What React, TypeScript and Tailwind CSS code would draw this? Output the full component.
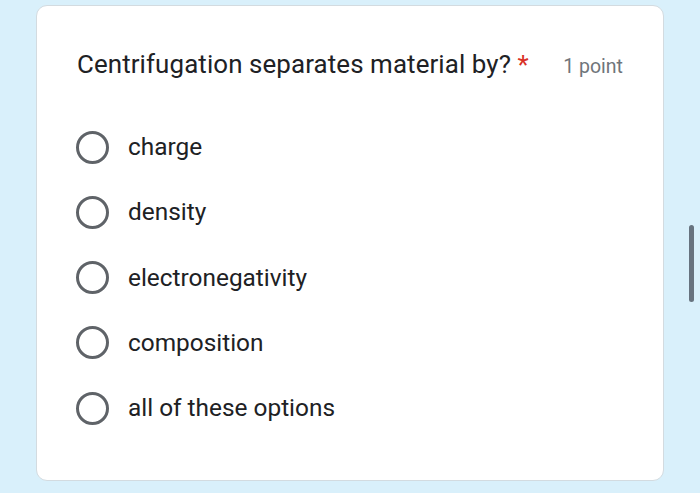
import React from "react";

const options = ["charge", "density", "electronegativity", "composition", "all of these options"];

export default function App() {
  return (
    <div className="relative w-[700px] h-[493px] bg-[#d9f0fb] overflow-hidden" style={{ fontFamily: "Roboto, 'Noto Sans', sans-serif" }}>
      <div className="pt-[5px] pl-[36px]">
        <div className="w-[628px] h-[476px] bg-white rounded-[11px] border border-[#d3dbe0] pl-[39px] pr-[40px] pt-[41px]">
          <div className="flex items-start justify-between">
            <div className="text-[25.9px] leading-[34px] text-[#202124] tracking-[0.1px] pl-[1px]">
              Centrifugation separates material by? <span className="text-[#d93025]">*</span>
            </div>
            <div className="text-[19.5px] leading-[34px] text-[#70757a] mt-[3px]">1 point</div>
          </div>
          <div className="flex flex-col mt-[47px] gap-[33.3px]">
            {options.map((o) => (
              <div key={o} className="flex items-center h-[32px]">
                <div className="w-[33px] h-[33px] rounded-full border-[3px] border-[#5f6368] shrink-0" />
                <div className="ml-[19px] text-[24.4px] text-[#202124] leading-[32px]">{o}</div>
              </div>
            ))}
          </div>
        </div>
      </div>
      <div className="absolute left-[689px] top-[225px] w-[5px] h-[77px] rounded-full bg-[#67737f]" />
    </div>
  );
}
